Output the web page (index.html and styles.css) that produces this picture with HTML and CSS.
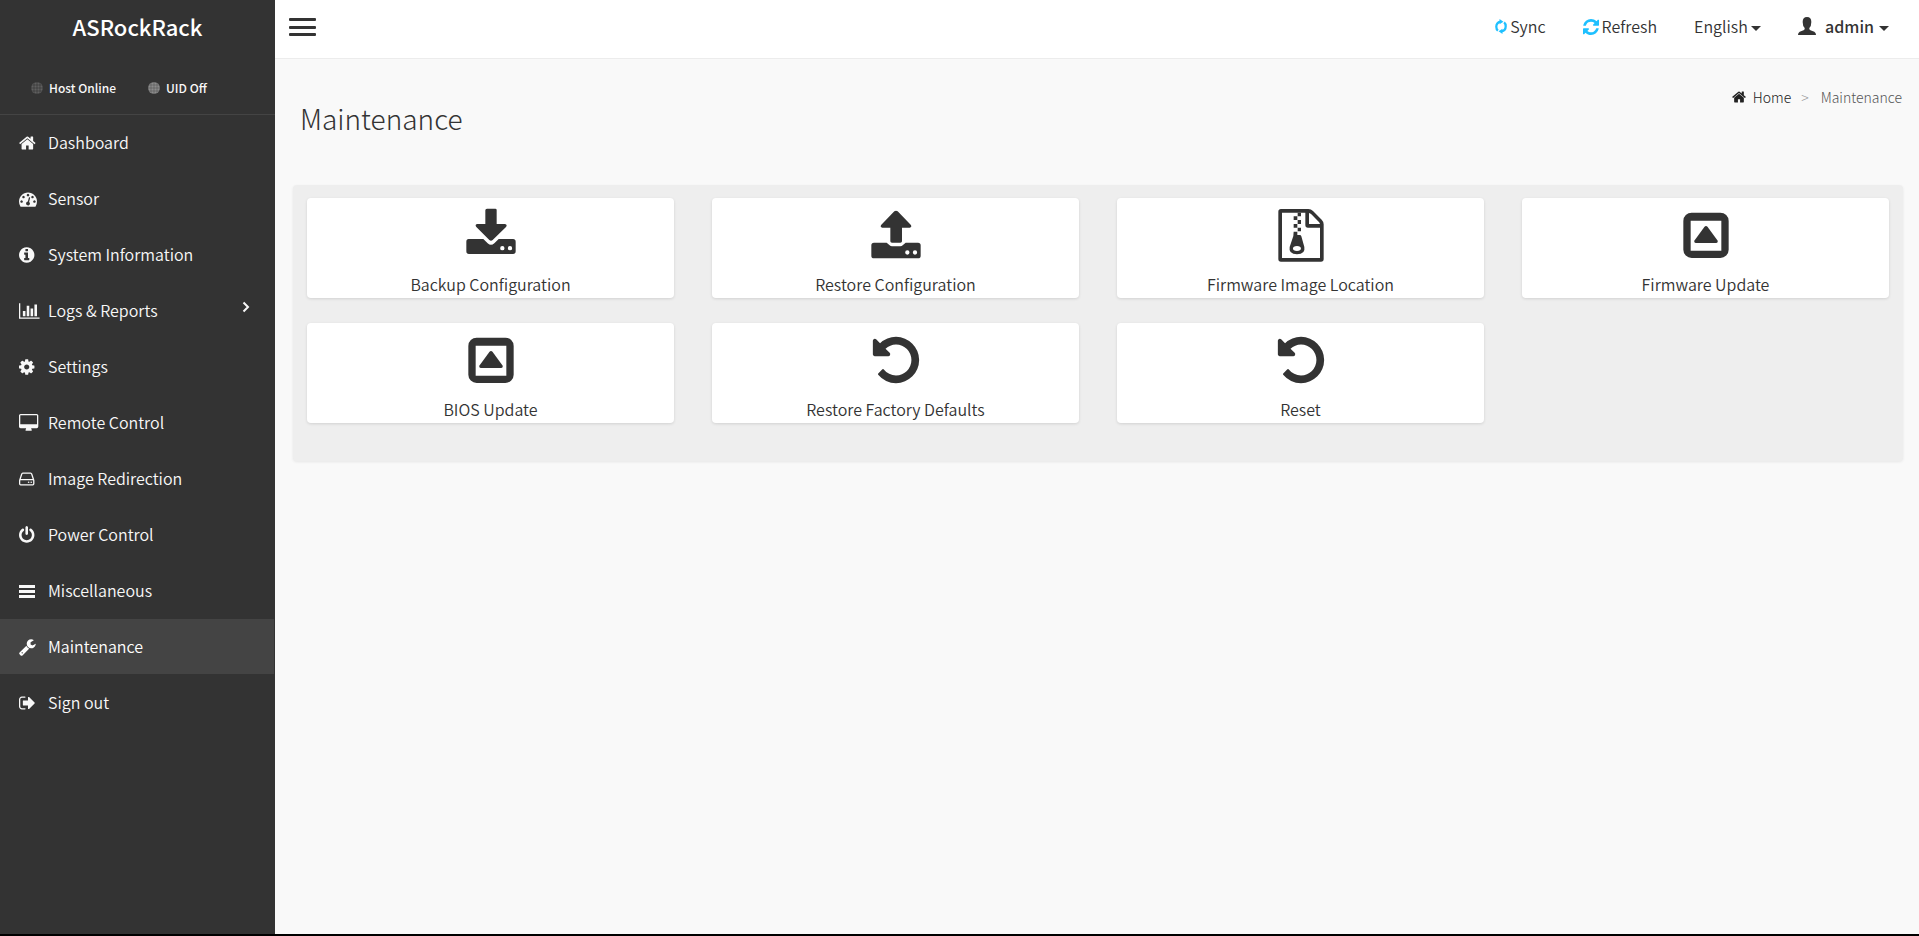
FILE: index.html
```html
<!DOCTYPE html>
<html lang="en">
<head>
<meta charset="utf-8">
<title>Maintenance</title>
<meta name="viewport" content="width=device-width, initial-scale=1">
<link rel="stylesheet" href="styles.css">
</head>
<body>
<svg class="sprite" aria-hidden="true">
  <symbol id="i-home" viewBox="0 0 1792 1792"><path d="M1472 992v480q0 26-19 45t-45 19h-384v-384h-256v384h-384q-26 0-45-19t-19-45v-480q0-1 .5-3t.5-3l575-474 575 474q1 2 1 6zm223-69l-62 74q-8 9-21 11h-3q-13 0-21-7l-692-577-692 577q-12 8-24 7-13-2-21-11l-62-74q-8-10-7-23.5t11-21.5l719-599q32-26 76-26t76 26l244 204v-195q0-14 9-23t23-9h192q14 0 23 9t9 23v408l219 182q10 8 11 21.5t-7 23.5z"/></symbol>
  <symbol id="i-undo" viewBox="0 0 1792 1792"><path d="M1664 896q0 156-61 298t-164 245-245 164-298 61q-172 0-327-72.5t-264-204.5q-7-10-6.5-22.5t8.5-20.5l137-138q10-9 25-9 16 2 23 12 73 95 179 147t225 52q104 0 198.5-40.5t163.5-109.5 109.5-163.5 40.5-198.5-40.5-198.5-109.5-163.5-163.5-109.5-198.5-40.5q-98 0-188 35.5t-160 101.5l137 138q31 30 14 69-17 40-59 40h-448q-26 0-45-19t-19-45v-448q0-42 40-59 39-17 69 14l130 129q107-101 244.5-156.5t284.5-55.5q156 0 298 61t245 164 164 245 61 298z"/></symbol>
  <symbol id="i-update" viewBox="0 -2 162 162"><path fill-rule="evenodd" d="M38 12h86a25 25 0 0 1 25 25v86a25 25 0 0 1-25 25H38a25 25 0 0 1-25-25V37a25 25 0 0 1 25-25zM35 36v90h92V36z"/><path d="M76 55q5-6 10 0l29 40q4 7-4 8H51q-8-1-4-8z"/></symbol>
  <symbol id="i-caret" viewBox="0 0 10 5"><path d="M0 0h10L5 5z"/></symbol>
</svg>
<div class="app">
  <aside class="sidebar">
    <a class="logo" href="#">ASRockRack</a>
    <div class="status">
      <span class="status-item"><i class="dot dot-dim"></i>Host Online</span>
      <span class="status-item"><i class="dot"></i>UID Off</span>
    </div>
    <nav class="menu">
      <a href="#"><svg class="mi" viewBox="64 0 1792 1792"><use href="#i-home" width="1792" height="1792"/></svg><span>Dashboard</span></a>
      <a href="#"><svg class="mi" viewBox="0 0 1792 1792"><path d="M384 1152q0-53-37.500-90.500t-90.500-37.500-90.500 37.500-37.500 90.500 37.500 90.500 90.500 37.500 90.500-37.500 37.500-90.500zm192-448q0-53-37.500-90.500t-90.500-37.500-90.500 37.500-37.500 90.500 37.500 90.500 90.500 37.500 90.500-37.500 37.500-90.500zm428 481l101-382q6-26-7.500-48.500t-38.500-29.500-48 6.500-30 39.500l-101 382q-60 5-107 43.500t-63 98.500q-20 77 20 146t117 89 146-20 89-117q16-60-6-117t-72-91zm660-33q0-53-37.500-90.500t-90.500-37.500-90.500 37.500-37.500 90.500 37.500 90.500 90.500 37.500 90.500-37.500 37.500-90.500zm-640-640q0-53-37.500-90.500t-90.500-37.500-90.500 37.500-37.500 90.500 37.500 90.500 90.500 37.500 90.500-37.500 37.500-90.500zm448 192q0-53-37.500-90.500t-90.500-37.500-90.500 37.500-37.500 90.500 37.500 90.500 90.500 37.500 90.500-37.500 37.500-90.500zm320 448q0 261-141 483-19 29-54 29h-1402q-35 0-54-29-141-221-141-483 0-182 71-348t191-286 286-191 348-71 348 71 286 191 191 286 71 348z"/></svg><span>Sensor</span></a>
      <a href="#"><svg class="mi" viewBox="128 0 1792 1792"><path d="M1152 1376v-160q0-14-9-23t-23-9h-96v-512q0-14-9-23t-23-9h-320q-14 0-23 9t-9 23v160q0 14 9 23t23 9h96v320h-96q-14 0-23 9t-9 23v160q0 14 9 23t23 9h448q14 0 23-9t9-23zm-128-896v-160q0-14-9-23t-23-9h-192q-14 0-23 9t-9 23v160q0 14 9 23t23 9h192q14 0 23-9t9-23zm640 416q0 209-103 385.500t-279.500 279.500-385.500 103-385.500-103-279.500-279.500-103-385.500 103-385.500 279.500-279.500 385.500-103 385.500 103 279.500 279.500 103 385.500z"/></svg><span>System Information</span></a>
      <a href="#"><svg class="mi" viewBox="0 0 1792 1792"><path d="M640 896v512h-256v-512h256zm384-512v1024h-256v-1024h256zm1024 1152v128h-2048v-1536h128v1408h1920zm-640-896v768h-256v-768h256zm384-384v1152h-256v-1152h256z"/></svg><span>Logs &amp; Reports</span><svg class="arrow" viewBox="0 0 8 12"><path d="M1.500 1.500L6 6l-4.500 4.500" fill="none" stroke="currentColor" stroke-width="2"/></svg></a>
      <a href="#"><svg class="mi" viewBox="128 0 1792 1792"><path d="M1152 896q0-106-75-181t-181-75-181 75-75 181 75 181 181 75 181-75 75-181zm512-109v222q0 12-8 23t-20 13l-185 28q-19 54-39 91 35 50 107 138 10 12 10 25t-9 23q-27 37-99 108t-94 71q-12 0-26-9l-138-108q-44 23-91 38-16 136-29 186-7 28-36 28h-222q-14 0-24.500-8.500t-11.500-21.500l-28-184q-49-16-90-37l-141 107q-10 9-25 9-14 0-25-11-126-114-165-168-7-10-7-23 0-12 8-23 15-21 51-66.500t54-70.500q-27-50-41-99l-183-27q-13-2-21-12.500t-8-23.500v-222q0-12 8-23t19-13l186-28q14-46 39-92-40-57-107-138-10-12-10-24 0-10 9-23 26-36 98.500-107.500t94.500-71.500q13 0 26 10l138 107q44-23 91-38 16-136 29-186 7-28 36-28h222q14 0 24.500 8.500t11.500 21.500l28 184q49 16 90 37l142-107q9-9 24-9 13 0 25 10 129 119 165 170 7 8 7 22 0 12-8 23-15 21-51 66.500t-54 70.500q26 50 41 98l183 28q13 2 21 12.500t8 23.500z"/></svg><span>Settings</span></a>
      <a href="#"><svg class="mi" viewBox="-64 0 1792 1792"><path d="M1728 992v-832q0-13-9.500-22.500t-22.500-9.500h-1600q-13 0-22.500 9.500t-9.500 22.500v832q0 13 9.500 22.500t22.500 9.500h1600q13 0 22.500-9.500t9.500-22.500zm128-832v1088q0 66-47 113t-113 47h-544q0 37 16 77.500t32 71 16 43.500q0 26-19 45t-45 19h-512q-26 0-45-19t-19-45q0-14 16-44t32-70 16-78h-544q-66 0-113-47t-47-113v-1088q0-66 47-113t113-47h1600q66 0 113 47t47 113z"/></svg><span>Remote Control</span></a>
      <a href="#"><svg class="mi" viewBox="128 0 1792 1792"><circle cx="1088" cy="1216" r="80"/><circle cx="1344" cy="1216" r="80"/><path d="M1536 1376v-320q0-13-9.500-22.500t-22.500-9.500h-1216q-13 0-22.500 9.500t-9.500 22.500v320q0 13 9.500 22.500t22.500 9.500h1216q13 0 22.500-9.500t9.500-22.500zm-1230-480h1180l-157-482q-4-13-16-21.500t-26-8.500h-782q-14 0-26 8.500t-16 21.500zm1358 160v320q0 66-47 113t-113 47h-1216q-66 0-113-47t-47-113v-320q0-25 16-75l197-606q17-53 63-86t101-33h782q55 0 101 33t63 86l197 606q16 50 16 75z"/></svg><span>Image Redirection</span></a>
      <a href="#"><svg class="mi" viewBox="128 0 1792 1792"><path d="M1664 896q0 156-61 298t-164 245-245 164-298 61-298-61-245-164-164-245-61-298q0-182 80.500-343t226.500-270q43-32 95.500-25t83.500 50q32 42 24.500 94.500t-49.500 84.500q-98 74-151.500 181t-53.500 228q0 104 40.500 198.500t109.500 163.500 163.500 109.500 198.500 40.500 198.500-40.500 163.500-109.500 109.500-163.500 40.500-198.500q0-121-53.500-228t-151.500-181q-42-32-49.500-84.500t24.500-94.500q31-43 84-50t95 25q146 109 226.500 270t80.500 343zm-640-768v640q0 52-38 90t-90 38-90-38-38-90v-640q0-52 38-90t90-38 90 38 38 90z"/></svg><span>Power Control</span></a>
      <a href="#"><svg class="mi" viewBox="0 0 18 18"><path d="M0 3h16v3H0zM0 8h16v3H0zM0 13h16v3H0z"/></svg><span>Miscellaneous</span></a>
      <a href="#" class="active" aria-current="page"><svg class="mi" viewBox="64 0 1792 1792"><path d="M448 1472q0-26-19-45t-45-19-45 19-19 45 19 45 45 19 45-19 19-45zm644-420l-682 682q-37 37-90 37-52 0-91-37l-106-108q-38-36-38-90 0-53 38-91l681-681q39 98 114.500 173.500t173.500 114.500zm634-435q0 39-23 106-47 134-164.500 217.500t-258.500 83.500q-185 0-316.500-131.500t-131.500-316.500 131.500-316.500 316.500-131.500q58 0 121.500 16.500t107.500 46.500q16 11 16 28t-16 28l-293 169v224l193 107q5-3 79-48.500t135.500-81 70.500-35.500q15 0 23.500 10t8.500 25z"/></svg><span>Maintenance</span></a>
      <a href="#"><svg class="mi" viewBox="64 0 1792 1792"><path d="M704 1440q0 4 1 20t.5 26.500-3 23.500-10 19.500-20.500 6.500h-320q-119 0-203.500-84.500t-84.500-203.500v-704q0-119 84.500-203.500t203.500-84.500h320q13 0 22.500 9.500t9.500 22.500q0 4 1 20t.5 26.500-3 23.500-10 19.500-20.500 6.500h-320q-66 0-113 47t-47 113v704q0 66 47 113t113 47h312l11.500 1 11.500 3 8 5.500 7 9 2 13.500zm928-544q0 26-19 45l-544 544q-19 19-45 19t-45-19-19-45v-288h-448q-26 0-45-19t-19-45v-384q0-26 19-45t45-19h448v-288q0-26 19-45t45-19 45 19l544 544q19 19 19 45z"/></svg><span>Sign out</span></a>
    </nav>
  </aside>
  <div class="page">
    <header class="topbar">
      <button class="toggle" type="button" aria-label="Toggle navigation"><span></span><span></span><span></span></button>
      <div class="tools">
        <button class="tool" type="button"><svg class="sync" viewBox="0 0 37 46"><path d="M17 8Q4 11 4 24q0 8 5 12M20 38q13-3 13-16 0-8-5-12" fill="none" stroke="currentColor" stroke-width="7"/><path d="M14 0l12 8-12 8zM23 30l-12 8 12 8z"/></svg>Sync</button>
        <button class="tool" type="button"><svg class="refresh" viewBox="128 128 1536 1536"><path d="M1639 1056q0 5-1 7-64 268-268 434.500t-478 166.500q-146 0-282.500-55t-243.500-157l-129 129q-19 19-45 19t-45-19-19-45v-448q0-26 19-45t45-19h448q26 0 45 19t19 45-19 45l-137 137q71 66 161 102t187 36q134 0 250-65t186-179q11-17 53-117 8-23 30-23h192q13 0 22.500 9.500t9.500 22.500zm25-800v448q0 26-19 45t-45 19h-448q-26 0-45-19t-19-45 19-45l138-138q-148-137-349-137-134 0-250 65t-186 179q-11 17-53 117-8 23-30 23h-199q-13 0-22.500-9.500t-9.500-22.500v-7q65-268 270-434.500t480-166.500q146 0 284 55.500t245 156.500l130-129q19-19 45-19t45 19 19 45z"/></svg>Refresh</button>
        <label class="tool lang"><select aria-label="Language"><option>English</option></select><svg class="caret"><use href="#i-caret"/></svg></label>
        <button class="tool user" type="button"><svg class="person" viewBox="0 0 54 54"><path d="M27 0q13 0 13 15 0 12-6 18v4q1 3 11 6 9 3 9 11H0q0-8 9-11 10-3 11-6v-4q-6-6-6-18Q14 0 27 0z"/></svg><span>admin</span><svg class="caret"><use href="#i-caret"/></svg></button>
      </div>
    </header>
    <main class="content">
      <div class="heading">
        <h1>Maintenance</h1>
        <ol class="crumbs">
          <li><a href="#"><svg class="crumb-home" viewBox="64 192 1664 1408"><use href="#i-home" width="1792" height="1792"/></svg>Home</a></li>
          <li class="sep" aria-hidden="true">&gt;</li>
          <li>Maintenance</li>
        </ol>
      </div>
      <section class="panel">
        <a class="card" href="#"><svg viewBox="0 7 162 162"><path fill-rule="evenodd" d="M14 100h44l13 13q10 9 20 0l13-13h43q8 0 8 8v29q0 8-8 8H15q-8 0-8-8v-29q0-8 7-8zM115 121a6.500 6.500 0 1 0 0 13 6.500 6.500 0 0 0 0-13zm23 0a6.500 6.500 0 1 0 0 13 6.500 6.500 0 0 0 0-13z"/><path d="M69 9h25q4 0 4 4v42h25q8 2 3 9l-40 39q-5 4-10 0L37 64q-5-7 2-9h25V14q0-5 5-5z"/></svg><span>Backup Configuration</span></a>
        <a class="card" href="#"><svg viewBox="0 2 162 162"><path fill-rule="evenodd" d="M15 106h38l8 7q4 4 8 4h25q4 0 8-4l8-7h37q8 0 8 8v31q0 8-8 8H15q-8 0-8-8v-31q0-8 8-8zm100 23a6.500 6.500 0 1 0 0 13 6.500 6.500 0 0 0 0-13zm23 0a6.500 6.500 0 1 0 0 13 6.500 6.500 0 0 0 0-13z"/><path d="M76 12q5-4 10 0l39 40q5 7-3 9H99v41q0 4-5 4H69q-5 0-5-4V61H40q-8-2-3-9z"/></svg><span>Restore Configuration</span></a>
        <a class="card" href="#"><svg viewBox="0 2 162 162"><path fill-rule="evenodd" d="M21 5h82q8 0 14 6l26 26q6 6 6 14v104q0 8-8 8H21q-8 0-8-8V13q0-8 8-8zm3 11v136h114V61H102q-8 0-8-8V16zm81 1v33h33q-1-4-4-7l-22-22q-3-3-7-4z"/><path d="M71 16h10v11H71zM59 27h11v11H59zM71 38h10v12H71zM59 50h11v11H59zM71 61h10v11H71z"/><path fill-rule="evenodd" d="M59 73h11v10h7q4 0 5 4l9 32q4 22-22 22t-22-22l11-33zm10 43c-16 0-16 15 0 15s16-15 0-15z"/></svg><span>Firmware Image Location</span></a>
        <a class="card" href="#"><svg><use href="#i-update"/></svg><span>Firmware Update</span></a>
        <a class="card" href="#"><svg><use href="#i-update"/></svg><span>BIOS Update</span></a>
        <a class="card" href="#"><svg><use href="#i-undo"/></svg><span>Restore Factory Defaults</span></a>
        <a class="card" href="#"><svg><use href="#i-undo"/></svg><span>Reset</span></a>
      </section>
    </main>
  </div>
</div>
</body>
</html>
```

FILE: styles.css
```css
* { box-sizing: border-box; }

body {
  margin: 0;
  background: #f9f9f9;
  color: #333;
  font-family: "Noto Sans CJK SC", "Open Sans", sans-serif;
  font-size: 16px;
  font-weight: 350;
  line-height: 24px;
}

a { color: inherit; text-decoration: none; }
svg { fill: currentColor; flex: none; }
.sprite { position: absolute; width: 0; height: 0; }

button, select {
  margin: 0;
  padding: 0;
  border: 0;
  background: none;
  color: inherit;
  font: inherit;
  cursor: pointer;
}

.app {
  display: flex;
  min-height: 100vh;
  border-bottom: 2px solid #000;
}

/* Sidebar */
.sidebar {
  flex: 0 0 275px;
  background: #333;
  color: #f8f8f8;
}

.logo {
  display: block;
  height: 58px;
  padding-top: 10px;
  text-align: center;
  font-size: 22px;
  font-weight: 500;
  line-height: 32px;
  color: #fff;
}

.status {
  display: flex;
  gap: 32px;
  height: 57px;
  padding: 20px 31px 16px;
  border-bottom: 1px solid #444;
  font-size: 12px;
  font-weight: 500;
  line-height: 20px;
}
.status-item { display: flex; align-items: center; gap: 6px; }
.dot {
  width: 12px;
  height: 12px;
  border-radius: 50%;
  background: radial-gradient(circle, #8c8c8c 30%, #707070 60%) 0 0 / 3px 3px;
}
.dot-dim { background: radial-gradient(circle, #606060 30%, #484848 60%) 0 0 / 3px 3px; }

.menu { display: flex; flex-direction: column; padding-right: 1px; }
.menu a {
  display: flex;
  align-items: center;
  height: 56px;
  padding: 0 24px 0 19px;
  border-bottom: 1px solid #333;
}
.menu .active { background: #444; color: #fff; }
.menu span { margin-bottom: 1px; }
.mi { width: 18px; height: 18px; margin-right: 11px; overflow: visible; }
.arrow { width: 8px; height: 12px; margin: 0 0 8px auto; }

/* Top bar */
.page { flex: 1; min-width: 0; }
.topbar {
  display: flex;
  justify-content: space-between;
  align-items: flex-start;
  height: 59px;
  padding: 14px 30px 0 14px;
  border-bottom: 1px solid #ececec;
  background: #fff;
}
.toggle {
  display: flex;
  flex-direction: column;
  justify-content: space-between;
  width: 27px;
  height: 18px;
  margin-top: 4px;
}
.toggle span { height: 3px; border-radius: 1px; background: #333; }
.tools { display: flex; gap: 37px; }
.tool { display: flex; align-items: center; gap: 3px; }
.sync { width: 12px; height: 15px; color: #1ec0ff; }
.refresh { width: 16px; height: 16px; margin-top: 2px; color: #1ec0ff; }
.lang select { appearance: none; }
.caret { width: 10px; height: 5px; margin-top: 5px; }
.user { gap: 5px; font-weight: 500; }
.person { width: 18px; height: 18px; margin-right: 4px; }

/* Content */
.content { padding: 0 16px 0 18px; }
.heading {
  display: flex;
  justify-content: space-between;
  height: 126px;
  padding: 0 1px 0 7px;
}
h1 {
  margin: 0;
  padding-top: 39px;
  font-size: 28px;
  font-weight: 300;
  line-height: 40px;
}
.crumbs {
  display: flex;
  margin: 0;
  padding: 26px 0 0;
  list-style: none;
  font-size: 14px;
  font-weight: 300;
  color: #555;
}
.crumbs a { display: flex; align-items: center; gap: 7px; color: #222; }
.crumb-home { width: 14px; height: 12px; }
.crumbs .sep { padding: 0 12px 0 10px; color: #999; }

.panel {
  display: grid;
  grid-template-columns: repeat(4, 1fr);
  gap: 25px 38px;
  padding: 13px 14px 38px;
  border-radius: 4px;
  background: #eee;
  box-shadow: 0 1px 3px rgba(0, 0, 0, 0.08);
}
.card {
  display: flex;
  flex-direction: column;
  align-items: center;
  height: 100px;
  padding-top: 10px;
  border-radius: 4px;
  background: #fff;
  box-shadow: 0 1px 3px rgba(0, 0, 0, 0.12);
}
.card svg { width: 54px; height: 54px; margin-bottom: 10px; }
```
